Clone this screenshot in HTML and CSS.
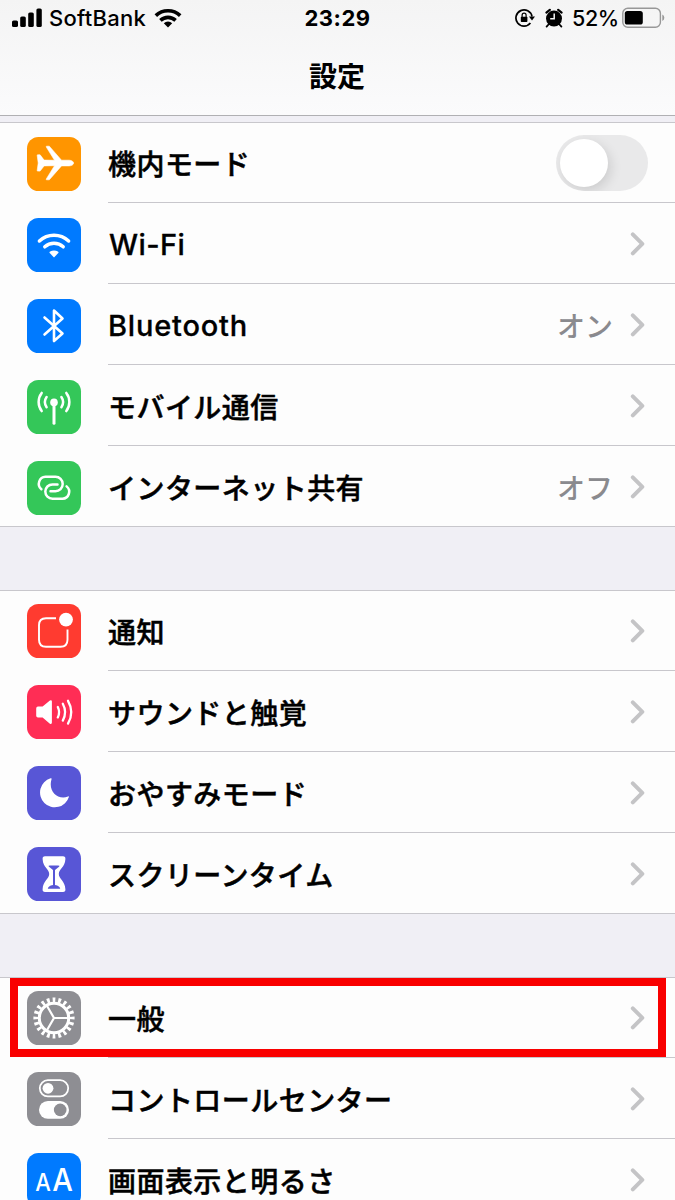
FILE: index.html
```html
<!DOCTYPE html>
<html lang="ja">
<head>
<meta charset="utf-8">
<title>設定</title>
<link rel="stylesheet" href="styles.css">
</head>
<body>
<div class="screen">
  <header class="header">
    <div class="status">
      <div class="status-left">
        <svg class="signal" width="31" height="20" viewBox="0 0 31 20"><rect x="0" y="12.5" width="6" height="6.5" rx="1.6"/><rect x="8.2" y="8.5" width="5.6" height="10.5" rx="1.6"/><rect x="16.2" y="4.5" width="5.6" height="14.5" rx="1.6"/><rect x="24.4" y="0.5" width="5.4" height="18.5" rx="1.6"/></svg>
        <span class="carrier">SoftBank</span>
        <svg class="wifi-status" width="28" height="20" viewBox="0 0 28 20"><g fill="none" stroke="#000" stroke-width="3.6"><path d="M1.8 7.6a17.6 17.6 0 0 1 24.4 0"/><path d="M6.4 12.4a11 11 0 0 1 15.2 0"/></g><path d="M14 19.5l-4.2-4.2a6 6 0 0 1 8.4 0z"/></svg>
      </div>
      <div class="time">23:29</div>
      <div class="status-right">
        <svg class="lock" width="20" height="20" viewBox="0 0 20 20"><path d="M17 8.5A8.1 8.1 0 1 0 15.4 15" fill="none" stroke="#000" stroke-width="1.7"/><path d="M13.9 8.4h6.1l-3 4.2z"/><rect x="5.8" y="8.8" width="6.6" height="5.2" rx=".7"/><path d="M7.1 9V7.2a2 2 0 0 1 4 0V9" fill="none" stroke="#000" stroke-width="1.2"/></svg>
        <svg class="alarm" width="18" height="20" viewBox="0 0 18 20"><circle cx="9" cy="10.6" r="8"/><path d="M1.4 4.6L4.8 1.8M16.6 4.6L13.2 1.8" stroke="#000" stroke-width="2.2" stroke-linecap="round"/><path d="M3.5 16.5L1.6 18.6M14.5 16.5l1.9 2.1" stroke="#000" stroke-width="1.8" stroke-linecap="round"/><path d="M9.2 5.5v5.2H5.2" fill="none" stroke="#f6f6f6" stroke-width="1.5"/></svg>
        <span class="percent">52%</span>
        <svg class="battery" width="43" height="22" viewBox="0 0 43 22"><rect x=".8" y="1.3" width="37.6" height="19" rx="5" fill="none" stroke="#989898" stroke-width="1.4"/><rect x="2.8" y="4" width="18" height="13.6" rx="2.6"/><path d="M40.3 7.5q2 1 2 3.3t-2 3.3z" fill="#989898"/></svg>
      </div>
    </div>
    <h1 class="title">設定</h1>
  </header>

  <main>
    <section class="group group-first">
      <div class="row">
        <svg class="icon orange" viewBox="0 0 54 54"><path d="M10.6 17.8h2.5l4 5.3 10.4.2-8.2-13.2q-.4-.9.4-.9h2.6l12.2 14h7.7c2.6.1 4.4 1.4 4.4 2.9s-1.8 2.7-4.4 2.8h-7.7L22.3 42.8h-2.6q-.8 0-.4-.9l8.2-13.2-10.4.2-4 5.2h-2.5q-.5 0-.4-.7l1-7.4-1-7.5q-.1-.7.4-.7z" fill="#fff" stroke="#fff" stroke-width=".6"/></svg>
        <span class="label">機内モード</span><span class="toggle"><i class="knob"></i></span>
      </div>
      <div class="row">
        <svg class="icon blue" viewBox="0 0 54 54"><g fill="none" stroke="#fff" stroke-width="3.5" stroke-linecap="round"><path d="M12.4 23a21.4 21.4 0 0 1 29.2 0"/><path d="M17.8 28.8a13.6 13.6 0 0 1 18.4 0"/></g><path d="M27 39.4l-4.3-4.3q-.7-.9.4-1.5a8.3 8.3 0 0 1 7.8 0q1.1.6.4 1.5z" fill="#fff"/></svg>
        <span class="label latin wifi-label">Wi-Fi</span><svg class="chevron" viewBox="0 0 16 24"><path d="M2.8 2.3l9.5 9.5-9.5 9.5"/></svg>
      </div>
      <div class="row">
        <svg class="icon blue" viewBox="0 0 54 54"><path d="M17.5 18.5L35.5 34.5 27 42V11.5L35.5 19.5 17.5 35.5" fill="none" stroke="#fff" stroke-width="2.6" stroke-linecap="round" stroke-linejoin="round"/></svg>
        <span class="label latin">Bluetooth</span><span class="value">オン</span><svg class="chevron" viewBox="0 0 16 24"><path d="M2.8 2.3l9.5 9.5-9.5 9.5"/></svg>
      </div>
      <div class="row">
        <svg class="icon green" viewBox="0 0 54 54"><circle cx="27" cy="22.4" r="3.8" fill="#fff"/><g fill="none" stroke="#fff" stroke-linecap="round" stroke-width="2.5"><path d="M27 24v19.2" stroke-width="3"/><path d="M19.6 17a9 9 0 0 0 0 10.2M34.4 17a9 9 0 0 1 0 10.2M14.7 12.9a15 15 0 0 0 0 18.2M39.3 12.9a15 15 0 0 1 0 18.2"/></g></svg>
        <span class="label">モバイル通信</span><svg class="chevron" viewBox="0 0 16 24"><path d="M2.8 2.3l9.5 9.5-9.5 9.5"/></svg>
      </div>
      <div class="row">
        <svg class="icon green" viewBox="0 0 54 54"><g fill="none" stroke="#fff" stroke-width="2.5" stroke-linecap="round"><path d="M14.4 28.2A7 7 0 0 1 18.5 15.8H28.5A7.2 7.2 0 0 1 28.5 30.2H23.5"/><path d="M39.6 25.4A7 7 0 0 1 35.5 37.8H25.5A7.2 7.2 0 0 1 25.5 23.4H30.5"/></g></svg>
        <span class="label">インターネット共有</span><span class="value">オフ</span><svg class="chevron" viewBox="0 0 16 24"><path d="M2.8 2.3l9.5 9.5-9.5 9.5"/></svg>
      </div>
    </section>

    <section class="group">
      <div class="row">
        <svg class="icon red" viewBox="0 0 54 54"><path d="M29 14.3H19Q12 14.3 12 21.3V35.8Q12 42.8 19 42.8H33.5Q40.5 42.8 40.5 35.8V25.5" fill="none" stroke="#fff" stroke-width="1.9"/><circle cx="39" cy="15.6" r="6.9" fill="#fff"/></svg>
        <span class="label">通知</span><svg class="chevron" viewBox="0 0 16 24"><path d="M2.8 2.3l9.5 9.5-9.5 9.5"/></svg>
      </div>
      <div class="row">
        <svg class="icon pink" viewBox="0 0 54 54"><path d="M11 21.6h4.6l7.3-6.2q2-.9 2 1.2v21q0 2.1-2 1.2l-7.3-6.2H11q-1.8 0-1.8-1.8v-7.4q0-1.8 1.8-1.8z" fill="#fff"/><g fill="none" stroke="#fff" stroke-width="2.3" stroke-linecap="round"><path d="M30.8 22q2.6 5.2 0 10.4"/><path d="M35.8 18.8q4.6 8.4 0 16.8"/><path d="M41 15.8q6.6 11.4 0 22.8"/></g></svg>
        <span class="label">サウンドと触覚</span><svg class="chevron" viewBox="0 0 16 24"><path d="M2.8 2.3l9.5 9.5-9.5 9.5"/></svg>
      </div>
      <div class="row">
        <svg class="icon purple" viewBox="0 0 54 54"><path d="M23.6 12.3A14.8 14.8 0 1 0 42 30.8Q42 30 41 30.6C30 34.5 20.8 24.4 24.6 13Q24.8 12 23.6 12.3z" fill="#fff"/></svg>
        <span class="label">おやすみモード</span><svg class="chevron" viewBox="0 0 16 24"><path d="M2.8 2.3l9.5 9.5-9.5 9.5"/></svg>
      </div>
      <div class="row">
        <svg class="icon purple" viewBox="0 0 54 54"><path d="M18 9.2h18q2.6 0 2.4 2.8C38 20.5 31.8 22 31.8 27S38 33.5 38.4 42.3Q38.6 45 36 45H18q-2.6 0-2.4-2.7C16 33.5 22.2 32 22.2 27S16 20.5 15.6 12Q15.4 9.2 18 9.2z" fill="#fff"/><path d="M23 18.6h8q2.2 0 1 1.2L28 23v15q5 1 5.2 3.8H20.8q.2-2.8 5.2-3.8V23l-4-3.2q-1.2-1.2 1-1.2z" fill="#5856d6"/></svg>
        <span class="label">スクリーンタイム</span><svg class="chevron" viewBox="0 0 16 24"><path d="M2.8 2.3l9.5 9.5-9.5 9.5"/></svg>
      </div>
    </section>

    <section class="group">
      <div class="row selected">
        <svg class="icon gray" viewBox="0 0 54 54"><g fill="none" stroke="#fff"><circle cx="27" cy="27" r="14.7" stroke-width="3"/><circle cx="27" cy="27" r="18.1" stroke-width="5" pathLength="200" stroke-dasharray="4.8 5.2" stroke-dashoffset="2.4"/><path d="M27 27H42M27 27L19.5 14M27 27L19.5 40" stroke-width="2.2"/></g></svg>
        <span class="label">一般</span><svg class="chevron" viewBox="0 0 16 24"><path d="M2.8 2.3l9.5 9.5-9.5 9.5"/></svg>
      </div>
      <div class="row">
        <svg class="icon gray" viewBox="0 0 54 54"><rect x="12.8" y="8.2" width="28.4" height="16.2" rx="8.1" fill="none" stroke="#fff" stroke-width="1.8"/><circle cx="21" cy="16.3" r="5.4" fill="#fff"/><rect x="12" y="29" width="30" height="17.8" rx="8.9" fill="#fff"/><circle cx="33.2" cy="37.9" r="6.3" fill="#8e8e93"/></svg>
        <span class="label">コントロールセンター</span><svg class="chevron" viewBox="0 0 16 24"><path d="M2.8 2.3l9.5 9.5-9.5 9.5"/></svg>
      </div>
      <div class="row">
        <svg class="icon blue" viewBox="0 0 54 54"><text class="aa" x="8.3" y="38" font-size="24" textLength="15.6" lengthAdjust="spacingAndGlyphs">A</text><text class="aa" x="25.3" y="38" font-size="31" textLength="20.6" lengthAdjust="spacingAndGlyphs">A</text></svg>
        <span class="label">画面表示と明るさ</span><svg class="chevron" viewBox="0 0 16 24"><path d="M2.8 2.3l9.5 9.5-9.5 9.5"/></svg>
      </div>
    </section>
  </main>
</div>
</body>
</html>
```
FILE: styles.css
```css
*, *::before, *::after { box-sizing: border-box; }
body { margin: 0; font-family: Inter, "Noto Sans CJK JP", sans-serif; color: #000; }
svg { display: block; flex: none; }
.screen { width: 675px; height: 1200px; overflow: hidden; background: #f0eff5; }
.header { height: 116px; border-bottom: 1px solid #b0b0b3; background: linear-gradient(#f4f4f4, #fbfbfc); }
.status { display: grid; grid-template-columns: 1fr auto 1fr; align-items: center; height: 36px; padding: 0 12px 0 12px; }
.status-left, .status-right { display: flex; align-items: center; }
.status-right { justify-content: flex-end; }
.carrier { margin-left: 6px; width: 97px; font-size: 22px; font-weight: 500; letter-spacing: .25px; white-space: nowrap; }
.wifi-status { margin-left: 8px; }
.time { font-size: 22px; font-weight: 700; letter-spacing: .5px; }
.lock { margin-right: 10px; }
.alarm { margin-right: 9px; }
.percent { width: 46px; margin-right: 4px; font-size: 21.5px; font-weight: 500; letter-spacing: -.4px; white-space: nowrap; }
.battery { margin-right: -2px; }
.title { margin: 0 1px 0 0; height: 78px; line-height: 78px; text-align: center; font-size: 28px; font-weight: 700; font-family: "Noto Sans CJK JP", sans-serif; }
.group { margin-top: 63px; background: #fdfdfd; box-shadow: inset 0 1px #c8c7cc; }
.group-first { margin-top: 6px; }
.row { position: relative; display: flex; align-items: center; height: 81px; padding: 0 27px; }
.group-first .row { padding-top: 3px; }
.row::after { content: ""; position: absolute; left: 108px; right: 0; bottom: 0; height: 1px; background: #c8c7cc; }
.row:last-child::after { left: 0; }
.icon { width: 54px; height: 54px; border-radius: 11.5px; margin-right: 27px; }
.orange { background: #ff9500; }
.blue { background: #007aff; }
.green { background: #34c759; }
.red { background: #ff3b30; }
.pink { background: #ff2d55; }
.purple { background: #5856d6; }
.gray { background: #8e8e93; }
.aa { fill: #fff; font-family: Inter, sans-serif; font-weight: 500; }
.label { flex: 1; font-size: 28px; line-height: 40px; font-weight: 500; letter-spacing: .45px; -webkit-text-stroke: .5px #000; font-family: "Noto Sans CJK JP", sans-serif; white-space: nowrap; }
.group-first .label { margin-bottom: 3px; }
.group-first .latin { margin-bottom: 0; font-family: Inter, sans-serif; font-size: 29px; letter-spacing: .8px; -webkit-text-stroke-width: .3px; }
.group-first .wifi-label { letter-spacing: .4px; padding-left: 1px; }
.value { margin: 0 17px 3px 0; font-family: "Noto Sans CJK JP", sans-serif; font-size: 28px; line-height: 40px; font-weight: 500; color: #8a8a8e; }
.chevron { width: 16px; height: 24px; margin: 0 2px 0 0; }
.group-first .chevron { margin-bottom: 3px; }
.chevron path { fill: none; stroke: #c4c4c6; stroke-width: 4; stroke-linecap: round; stroke-linejoin: round; }
.toggle { width: 92px; height: 56px; margin-bottom: 2px; border-radius: 28px; background: #e9e9ea; padding: 4px; overflow: hidden; }
.knob { display: block; width: 48px; height: 48px; border-radius: 50%; background: #fff; box-shadow: 3px 4px 12px rgba(0,0,0,.12); }
.selected::before { content: ""; position: absolute; z-index: 1; left: 10px; top: 1px; width: 656px; height: 79px; border: 8px solid #f90000; }
```
